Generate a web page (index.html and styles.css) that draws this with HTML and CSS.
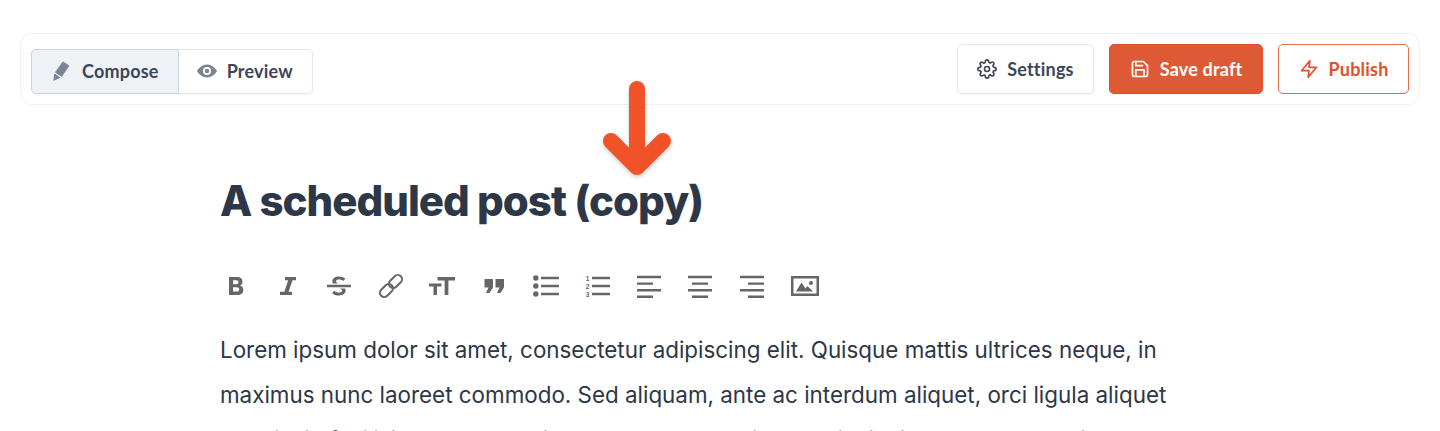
FILE: index.html
```html
<!DOCTYPE html>
<html lang="en">
<head>
    <meta charset="UTF-8">
    <meta name="viewport" content="width=device-width, initial-scale=1.0">
    <title>A scheduled post (copy)</title>
    <link rel="stylesheet" href="styles.css">
</head>
<body>
    <div class="page">
        <header class="editor-bar">
            <div class="tabs">
                <button class="tab tab-active">
                    <svg class="icon" viewBox="0 0 20 20" fill="#7c8493" stroke="#7c8493" stroke-width="1" stroke-linejoin="round"><path d="M11 .9 16.800 4.800 9.700 15.300 3.600 11.300z"/><path d="M2.700 13 7.600 16.500 1.900 19.300z"/></svg>
                    Compose
                </button>
                <button class="tab">
                    <svg class="icon" viewBox="0 0 20 20" fill="#7c8493"><path fill-rule="evenodd" d="M10 3.500c4.500 0 8 3 10 6.500-2 3.500-5.500 6.500-10 6.500S2 13.500 0 10c2-3.500 5.500-6.500 10-6.500zm0 2.500a4 4 0 1 0 0 8 4 4 0 0 0 0-8zm0 1.800a2.200 2.200 0 1 1 0 4.400 2.200 2.200 0 0 1 0-4.400z"/></svg>
                    Preview
                </button>
            </div>
            <div class="actions">
                <button class="btn">
                    <svg class="icon" viewBox="0 0 24 24" fill="none" stroke="#3d4658" stroke-width="2" stroke-linecap="round" stroke-linejoin="round"><circle cx="12" cy="12" r="3"/><path d="M19.400 15a1.650 1.650 0 0 0 .33 1.820l.06.06a2 2 0 1 1-2.830 2.830l-.06-.06a1.650 1.650 0 0 0-2.820 1.170V21a2 2 0 0 1-4 0v-.09A1.650 1.650 0 0 0 7.260 19.700l-.06.06a2 2 0 1 1-2.830-2.830l.06-.06a1.650 1.650 0 0 0-1.170-2.820H3a2 2 0 0 1 0-4h.09A1.650 1.650 0 0 0 4.300 7.260l-.06-.06a2 2 0 1 1 2.830-2.830l.06.06a1.650 1.650 0 0 0 1.820.33H9a1.650 1.650 0 0 0 1-1.510V3a2 2 0 0 1 4 0v.09a1.650 1.650 0 0 0 2.820 1.170l.06-.06a2 2 0 1 1 2.830 2.830l-.06.06a1.650 1.650 0 0 0-.33 1.820V9a1.650 1.650 0 0 0 1.510 1H21a2 2 0 0 1 0 4h-.09a1.650 1.650 0 0 0-1.510 1z"/></svg>
                    Settings
                </button>
                <button class="btn btn-save">
                    <svg class="icon" viewBox="0 0 24 24" fill="none" stroke="#fff" stroke-width="2" stroke-linecap="round" stroke-linejoin="round"><path d="M19 21H5a2 2 0 0 1-2-2V5a2 2 0 0 1 2-2h11l5 5v11a2 2 0 0 1-2 2z"/><path d="M17 21v-8H7v8M7 3v5h8"/></svg>
                    Save draft
                </button>
                <button class="btn btn-publish">
                    <svg class="icon" viewBox="0 0 24 24" fill="none" stroke="#e0512a" stroke-width="2" stroke-linecap="round" stroke-linejoin="round"><path d="M13 2 3 14h9l-1 8 10-12h-9z"/></svg>
                    Publish
                </button>
            </div>
        </header>

        <main class="post">
            <h1>A scheduled post (copy)</h1>

            <div class="format-bar">
                <svg class="fmt" viewBox="0 0 26 26" fill="#666"><path fill-rule="evenodd" d="M6 4h8c3.500 0 5.500 1.800 5.500 4.700 0 1.800-.9 3.200-2.400 3.900 2 .6 3.200 2.200 3.200 4.300 0 3.200-2.300 5.100-6 5.100H6zm4 3.300v3.900h3.300c1.400 0 2.200-.7 2.200-2 0-1.200-.8-1.900-2.200-1.900zm0 7v4.300h3.800c1.500 0 2.400-.8 2.400-2.200 0-1.300-.9-2.100-2.400-2.100z"/></svg>
                <svg class="fmt" viewBox="0 0 26 26" fill="#666"><path d="M10 4h11v3.200h-3.500L13.600 18.800H17V22H5v-3.200h4.300l3.900-11.600H10z"/></svg>
                <svg class="fmt" viewBox="0 0 26 26" fill="#666"><path d="M1 11.800h24v2.400H1zM7 10.400c-.4-.7-.6-1.400-.6-2.200C6.400 5.400 9 3.500 13 3.500c2.600 0 4.700.7 6.300 2l-1.800 2.600c-1.300-1-2.900-1.500-4.500-1.500-1.800 0-3 .6-3 1.600 0 .9.800 1.500 2.200 2.200zM19 15.500c.4.600.6 1.300.6 2.100 0 3-2.600 4.900-6.700 4.900-2.700 0-5-.8-6.800-2.300l1.900-2.500c1.400 1.200 3.100 1.800 4.900 1.800 2 0 3.200-.7 3.200-1.800 0-.9-.8-1.600-2.300-2.200z"/></svg>
                <svg class="fmt" viewBox="0 0 26 26" fill="none" stroke="#666" stroke-width="2"><rect x="10" y="4.250" width="15" height="8.500" rx="4.250" transform="rotate(-45 17.500 8.500)"/><rect x="1" y="13.250" width="15" height="8.500" rx="4.250" transform="rotate(-45 8.500 17.500)"/></svg>
                <svg class="fmt" viewBox="0 0 26 26" fill="#666"><path d="M8.500 4H26v3.400h-6.600V22h-3.800V7.400H8.500zM0 10.500h12.500v3H8v8.500H4.500v-8.500H0z"/></svg>
                <svg class="fmt" viewBox="0 0 26 26" fill="#666"><path d="M3.500 6h8.500v8.500L8.500 20H5l2.500-5.500h-4zM14.500 6H23v8.500L19.500 20H16l2.500-5.500h-4z"/></svg>
                <svg class="fmt" viewBox="0 0 26 26" fill="#666"><circle cx="2.800" cy="5" r="2.700"/><circle cx="2.800" cy="13" r="2.700"/><circle cx="2.800" cy="21" r="2.700"/><path d="M8 3.800h18v2.400H8zM8 11.800h18v2.400H8zM8 19.800h18v2.400H8z"/></svg>
                <svg class="fmt" viewBox="0 0 26 26" fill="#666"><path d="M8 3.800h18v2.400H8zM8 11.800h18v2.400H8zM8 19.800h18v2.400H8z"/><text class="fmt-num" x="3.500" y="7.500">1</text><text class="fmt-num" x="3.500" y="15.500">2</text><text class="fmt-num" x="3.500" y="23.500">3</text></svg>
                <svg class="fmt" viewBox="0 0 26 26" fill="#666"><path d="M1 2.800h24v2.400H1zM1 9.400h16v2.400H1zM1 16h24v2.400H1zM1 22.600h16V25H1z"/></svg>
                <svg class="fmt" viewBox="0 0 26 26" fill="#666"><path d="M1 2.800h24v2.400H1zM5 9.400h16v2.400H5zM1 16h24v2.400H1zM5 22.600h16V25H5z"/></svg>
                <svg class="fmt" viewBox="0 0 26 26" fill="#666"><path d="M1 2.800h24v2.400H1zM9 9.400h16v2.400H9zM1 16h24v2.400H1zM9 22.600h16V25H9z"/></svg>
                <svg class="fmt fmt-image" viewBox="0 0 28 22" fill="#666"><path fill-rule="evenodd" d="M0 1h28v20H0zm2.500 2.500v15h23v-15zM5 16.500l5.500-9 4 6 2-2.500 5.500 5.500zM20 6a2 2 0 1 1 0 4 2 2 0 0 1 0-4z"/></svg>
            </div>

            <p>Lorem ipsum dolor sit amet, consectetur adipiscing elit. Quisque mattis ultrices neque, in maximus nunc laoreet commodo. Sed aliquam, ante ac interdum aliquet, orci ligula aliquet mauris, in facilisis magna leo vitae nulla. Nam mattis lobortis tincidunt, nulla blandit vehicula nisl.</p>
        </main>

        <svg class="arrow" viewBox="0 0 70 98" fill="none" stroke="#f25227" stroke-width="16" stroke-linecap="round" stroke-linejoin="round"><path d="M35 8v78M9 60l26 26 26-26"/></svg>
    </div>
</body>
</html>
```

FILE: styles.css
```css
html, body {
    margin: 0;
    padding: 0;
    height: 431px;
    overflow: hidden;
    background-color: #fff;
}

body {
    font-family: Inter, sans-serif;
    color: #2d3748;
}

.page {
    position: relative;
    height: 431px;
    overflow: hidden;
    padding: 33px 20px 0;
    box-sizing: border-box;
}

.editor-bar {
    display: flex;
    justify-content: space-between;
    align-items: center;
    height: 72px;
    box-sizing: border-box;
    padding: 0 10px;
    border: 1px solid #eff2f7;
    border-radius: 12px;
}

button {
    font-family: Lato, sans-serif;
    font-weight: 700;
    font-size: 18px;
    letter-spacing: 0.2px;
    color: #3d4658;
    display: flex;
    align-items: center;
    gap: 10px;
    cursor: pointer;
}

.icon {
    width: 20px;
    height: 20px;
    flex: none;
}

.tabs {
    display: flex;
    margin-top: 4px;
    box-shadow: 0 1px 2px rgba(0, 0, 0, 0.05);
    border-radius: 5px;
}

.tab {
    height: 45px;
    padding: 0 19px 0 18px;
    background-color: #fff;
    border: 1px solid #e2e8f0;
    border-left: none;
    border-radius: 0 5px 5px 0;
}

.tab-active {
    padding: 0 19px 0 20px;
    background-color: #eef2f6;
    border: 1px solid #cbd5e0;
    border-radius: 5px 0 0 5px;
}

.actions {
    display: flex;
    gap: 15px;
}

.btn {
    height: 50px;
    padding: 0 19.5px;
    background-color: #fff;
    border: 1px solid #e2e8f0;
    border-radius: 5px;
    box-shadow: 0 1px 2px rgba(0, 0, 0, 0.05);
}

.btn-save {
    background-color: #de5a35;
    border-color: #e0512a;
    color: #fff;
}

.btn-publish {
    padding: 0 19.5px;
    border: 1.5px solid #e86c4a;
    color: #e0512a;
    box-shadow: none;
}

.post {
    width: 1000px;
    margin: 0 auto;
}

h1 {
    margin: 71px 0 0;
    font-size: 42px;
    line-height: 50px;
    font-weight: 800;
    letter-spacing: -1px;
    color: #2d3748;
}

.format-bar {
    display: flex;
    align-items: center;
    gap: 25.6px;
    margin-top: 47px;
    padding-left: 3px;
}

.fmt {
    width: 26px;
    height: 26px;
    flex: none;
}

.fmt-num {
    font-family: "Liberation Sans", sans-serif;
    font-size: 6.5px;
    font-weight: 700;
    text-anchor: middle;
}

.fmt-image {
    width: 28px;
    height: 22px;
}

p {
    margin: 28px 0 0;
    width: 960px;
    font-size: 22.4px;
    line-height: 45px;
    color: #2d3748;
}

.arrow {
    position: absolute;
    left: 602px;
    top: 81px;
    width: 70px;
    height: 98px;
    filter: drop-shadow(0 2px 2px rgba(0, 0, 0, 0.2));
}
```
